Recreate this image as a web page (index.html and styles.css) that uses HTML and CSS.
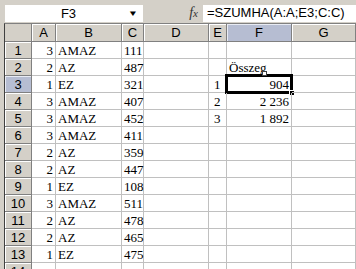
FILE: index.html
```html
<!DOCTYPE html>
<html lang="hu">
<head>
  <meta charset="UTF-8" />
  <title>SZUMHA</title>
  <link rel="stylesheet" href="styles.css">
</head>
<body>
  <div class="formula-bar">
    <div class="name-box">
      <span class="name">F3</span>
      <span class="drop">&#9660;</span>
    </div>
    <div class="fx"><i>f</i><span>x</span></div>
    <div class="formula">=SZUMHA(A:A;E3;C:C)</div>
  </div>

  <div class="sheet">
    <div class="hd corner"></div>
    <div class="hd">A</div>
    <div class="hd">B</div>
    <div class="hd">C</div>
    <div class="hd">D</div>
    <div class="hd">E</div>
    <div class="hd active">F</div>
    <div class="hd">G</div>

    <div class="rh">1</div><div class="c num">3</div><div class="c">AMAZ</div><div class="c num">111</div><div class="c"></div><div class="c"></div><div class="c"></div><div class="c"></div>
    <div class="rh">2</div><div class="c num">2</div><div class="c">AZ</div><div class="c num">487</div><div class="c"></div><div class="c"></div><div class="c">Összeg</div><div class="c"></div>
    <div class="rh active">3</div><div class="c num">1</div><div class="c">EZ</div><div class="c num">321</div><div class="c"></div><div class="c idx">1</div><div class="c num sel">904<span class="mark"></span><span class="handle"></span></div><div class="c"></div>
    <div class="rh">4</div><div class="c num">3</div><div class="c">AMAZ</div><div class="c num">407</div><div class="c"></div><div class="c idx">2</div><div class="c num">2 236</div><div class="c"></div>
    <div class="rh">5</div><div class="c num">3</div><div class="c">AMAZ</div><div class="c num">452</div><div class="c"></div><div class="c idx">3</div><div class="c num">1 892</div><div class="c"></div>
    <div class="rh">6</div><div class="c num">3</div><div class="c">AMAZ</div><div class="c num">411</div><div class="c"></div><div class="c"></div><div class="c"></div><div class="c"></div>
    <div class="rh">7</div><div class="c num">2</div><div class="c">AZ</div><div class="c num">359</div><div class="c"></div><div class="c"></div><div class="c"></div><div class="c"></div>
    <div class="rh">8</div><div class="c num">2</div><div class="c">AZ</div><div class="c num">447</div><div class="c"></div><div class="c"></div><div class="c"></div><div class="c"></div>
    <div class="rh">9</div><div class="c num">1</div><div class="c">EZ</div><div class="c num">108</div><div class="c"></div><div class="c"></div><div class="c"></div><div class="c"></div>
    <div class="rh">10</div><div class="c num">3</div><div class="c">AMAZ</div><div class="c num">511</div><div class="c"></div><div class="c"></div><div class="c"></div><div class="c"></div>
    <div class="rh">11</div><div class="c num">2</div><div class="c">AZ</div><div class="c num">478</div><div class="c"></div><div class="c"></div><div class="c"></div><div class="c"></div>
    <div class="rh">12</div><div class="c num">2</div><div class="c">AZ</div><div class="c num">465</div><div class="c"></div><div class="c"></div><div class="c"></div><div class="c"></div>
    <div class="rh">13</div><div class="c num">1</div><div class="c">EZ</div><div class="c num">475</div><div class="c"></div><div class="c"></div><div class="c"></div><div class="c"></div>
    <div class="rh">14</div><div class="c"></div><div class="c"></div><div class="c"></div><div class="c"></div><div class="c"></div><div class="c"></div><div class="c"></div>
  </div>
</body>
</html>
```

FILE: styles.css
```css
* {
  box-sizing: border-box;
  margin: 0;
  padding: 0;
}

body {
  background: #d4d0c8;
  width: 356px;
  height: 269px;
  overflow: hidden;
  font-family: "Liberation Sans", Arial, sans-serif;
  font-size: 13px;
  color: #000;
  padding-top: 5px;
}

.formula-bar {
  display: flex;
  height: 17px;
  margin-left: 5px;
}

.name-box {
  width: 138px;
  background: #fff;
  display: flex;
  align-items: center;
}

.name-box .name {
  flex: 1;
  text-align: center;
  line-height: 16px;
  padding-left: 7px;
}

.name-box .drop {
  font-size: 8px;
  width: 16px;
  margin-right: 2px;
  text-align: center;
  transform: scaleX(1.3);
}

.fx {
  width: 60px;
  text-align: right;
  padding-right: 5px;
  font-family: "Liberation Serif", serif;
  font-size: 14px;
  line-height: 16px;
  color: #333;
}

.fx i {
  font-weight: normal;
}

.fx span {
  font-style: italic;
  font-size: 11px;
}

.formula {
  flex: 1;
  background: #fff;
  line-height: 16px;
  padding-left: 4px;
}

.sheet {
  margin-top: 1px;
  margin-left: 4px;
  display: grid;
  grid-template-columns: 27px 24px 66px 22px 65px 18px 65px 64px;
  grid-template-rows: 18px repeat(14, 17px);
  border-left: 1px solid #404040;
  border-top: 1px solid #808080;
  background: #fff;
}

.hd,
.rh {
  background: #d4d0c8;
  border-right: 1px solid #808080;
  border-bottom: 1px solid #808080;
  box-shadow: inset 1px 1px #fff;
  text-align: center;
  line-height: 17px;
  font-size: 13px;
}

.hd.active,
.rh.active {
  background: #b6bdd2;
  box-shadow: inset 1px 1px #e8ebf3;
}

.corner {
  box-shadow: none;
}

.c {
  position: relative;
  border-right: 1px solid #c0c0c0;
  border-bottom: 1px solid #c0c0c0;
  font-family: "Liberation Serif", "Times New Roman", serif;
  font-size: 13px;
  line-height: 17px;
  padding: 0 2px;
  white-space: nowrap;
}

.num {
  text-align: right;
}

.idx {
  padding-left: 5px;
}

.sel::before {
  content: "";
  position: absolute;
  top: -2px;
  left: -2px;
  right: -2px;
  bottom: -2px;
  border: 3px solid #000;
}

.mark {
  position: absolute;
  top: -5px;
  left: 35px;
  width: 5px;
  height: 5px;
  background: #fff;
  border: 1px solid #404040;
}

.handle {
  position: absolute;
  right: -4px;
  bottom: -4px;
  width: 6px;
  height: 6px;
  background: #000;
  border: 1px solid #fff;
}
```
